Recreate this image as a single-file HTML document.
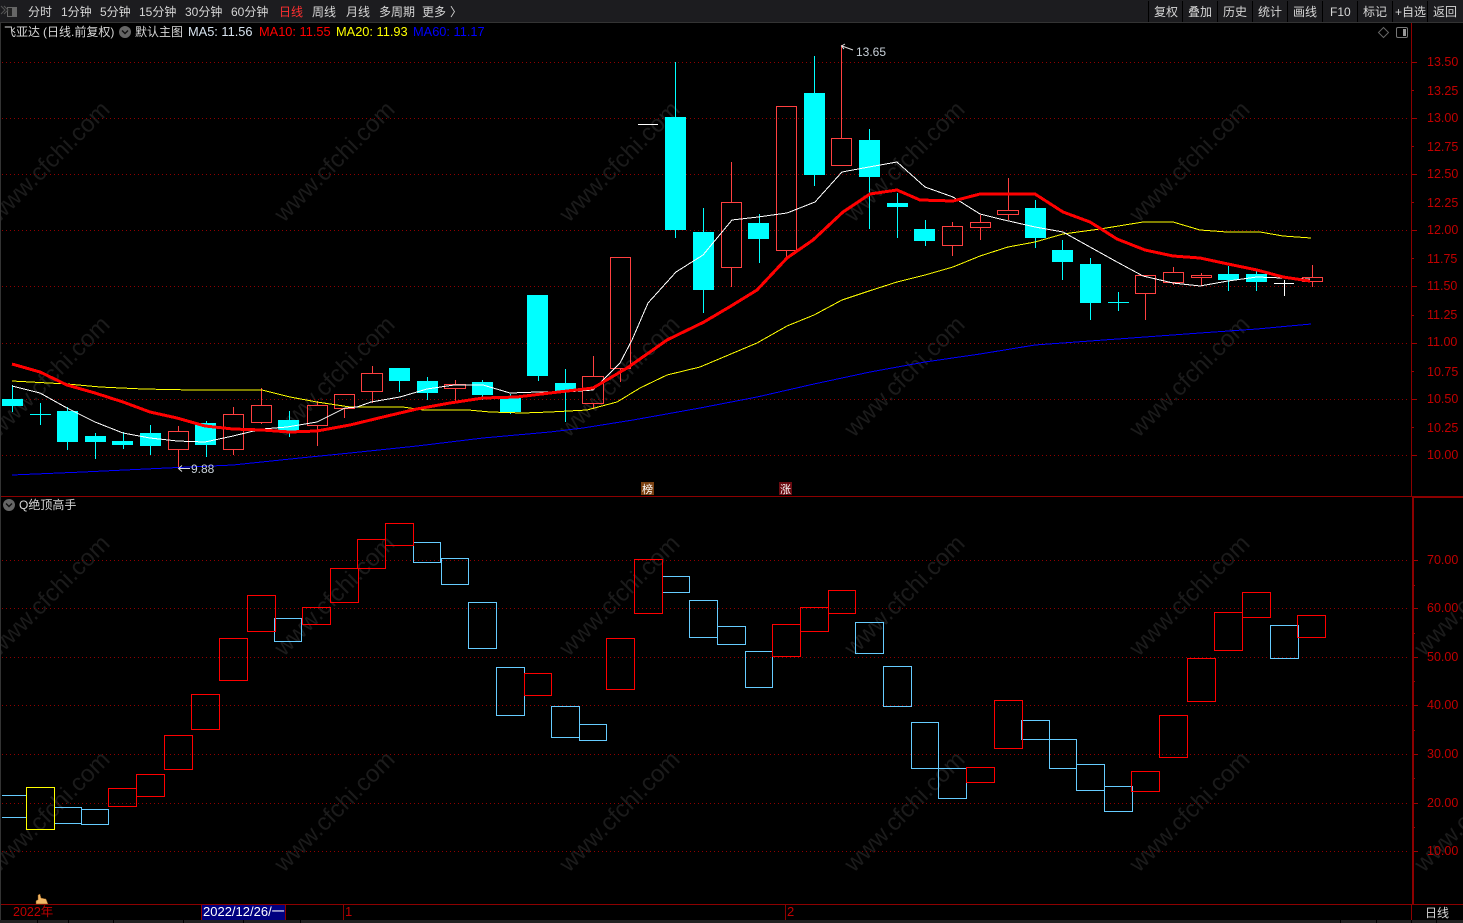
<!DOCTYPE html>
<html>
<head>
<meta charset="utf-8">
<title>飞亚达</title>
<style>
html,body{margin:0;padding:0;background:#000;width:1463px;height:923px;overflow:hidden}
svg{display:block;position:absolute;left:0;top:0}
text{font-family:"Liberation Sans","Noto Sans CJK SC",sans-serif;font-size:12px;white-space:pre}
.t text{fill:#d6d6d6}
.ax text{fill:#c00000;font-size:12.5px}
.wm text{fill:#1b1b1b;font-size:24px;text-anchor:middle}
.c{shape-rendering:crispEdges}
.ln{fill:none;shape-rendering:crispEdges}
.ma text{font-size:12.8px}
</style>
</head>
<body>
<svg width="1463" height="923" viewBox="0 0 1463 923" xmlns="http://www.w3.org/2000/svg">
<rect width="1463" height="923" fill="#000"/>

<!-- watermarks -->
<g class="wm">
<text transform="translate(55,167) rotate(-45)">www.cfchi.com</text>
<text transform="translate(340,167) rotate(-45)">www.cfchi.com</text>
<text transform="translate(625,167) rotate(-45)">www.cfchi.com</text>
<text transform="translate(910,167) rotate(-45)">www.cfchi.com</text>
<text transform="translate(1195,167) rotate(-45)">www.cfchi.com</text>
<text transform="translate(55,382) rotate(-45)">www.cfchi.com</text>
<text transform="translate(340,382) rotate(-45)">www.cfchi.com</text>
<text transform="translate(625,382) rotate(-45)">www.cfchi.com</text>
<text transform="translate(910,382) rotate(-45)">www.cfchi.com</text>
<text transform="translate(1195,382) rotate(-45)">www.cfchi.com</text>
<text transform="translate(55,601) rotate(-45)">www.cfchi.com</text>
<text transform="translate(340,601) rotate(-45)">www.cfchi.com</text>
<text transform="translate(625,601) rotate(-45)">www.cfchi.com</text>
<text transform="translate(910,601) rotate(-45)">www.cfchi.com</text>
<text transform="translate(1195,601) rotate(-45)">www.cfchi.com</text>
<text transform="translate(1480,601) rotate(-45)">www.cfchi.com</text>
<text transform="translate(55,817) rotate(-45)">www.cfchi.com</text>
<text transform="translate(340,817) rotate(-45)">www.cfchi.com</text>
<text transform="translate(625,817) rotate(-45)">www.cfchi.com</text>
<text transform="translate(910,817) rotate(-45)">www.cfchi.com</text>
<text transform="translate(1195,817) rotate(-45)">www.cfchi.com</text>
<text transform="translate(1480,817) rotate(-45)">www.cfchi.com</text>
</g>

<!-- grid -->
<path class="c" d="M2 62.5H1408M2 118.5H1408M2 174.5H1408M2 230.5H1408M2 286.5H1408M2 343.5H1408M2 399.5H1408M2 455.5H1408M2 560.5H1408M2 608.5H1408M2 657.5H1408M2 705.5H1408M2 754.5H1408M2 803.5H1408M2 851.5H1408" stroke="#900000" stroke-width="1" stroke-dasharray="1 3" fill="none"/>

<!-- frame -->
<rect x="0" y="22" width="1" height="901" fill="#333" class="c"/>
<rect x="1" y="496" width="1462" height="1" fill="#8c0000" class="c"/>
<rect x="1" y="904" width="1462" height="1" fill="#8c0000" class="c"/>
<rect x="1411" y="22" width="1" height="475" fill="#8c0000" class="c"/>
<rect x="1412" y="496" width="51" height="2" fill="#8c0000" class="c"/>
<rect x="1412" y="497" width="2" height="408" fill="#8c0000" class="c"/>
<rect x="1411" y="905" width="1" height="15" fill="#8c0000" class="c"/>

<!-- axis ticks -->
<path class="c" stroke="#a00000" fill="none" d="M1412 62.5h5M1412 90.5h2M1412 118.5h5M1412 146.5h2M1412 174.5h5M1412 202.5h2M1412 230.5h5M1412 258.5h2M1412 286.5h5M1412 315.5h2M1412 343.5h5M1412 371.5h2M1412 399.5h5M1412 427.5h2M1412 455.5h5M1414 560.5h4M1414 585.5h1M1414 608.5h4M1414 633.5h1M1414 657.5h4M1414 681.5h1M1414 705.5h4M1414 730.5h1M1414 754.5h4M1414 778.5h1M1414 803.5h4M1414 827.5h1M1414 851.5h4"/>
<g class="ax">
<text x="1427" y="66">13.50</text>
<text x="1427" y="95">13.25</text>
<text x="1427" y="122">13.00</text>
<text x="1427" y="151">12.75</text>
<text x="1427" y="178">12.50</text>
<text x="1427" y="207">12.25</text>
<text x="1427" y="234">12.00</text>
<text x="1427" y="263">11.75</text>
<text x="1427" y="290">11.50</text>
<text x="1427" y="319">11.25</text>
<text x="1427" y="346">11.00</text>
<text x="1427" y="376">10.75</text>
<text x="1427" y="403">10.50</text>
<text x="1427" y="432">10.25</text>
<text x="1427" y="459">10.00</text>
<text x="1427" y="564">70.00</text>
<text x="1427" y="612">60.00</text>
<text x="1427" y="661">50.00</text>
<text x="1427" y="709">40.00</text>
<text x="1427" y="758">30.00</text>
<text x="1427" y="807">20.00</text>
<text x="1427" y="855">10.00</text>
</g>

<!-- cyan wicks -->
<path class="c" stroke="#00ffff" fill="none" d="M12.5 385V412M40.5 403V425M30 414.5H51M67.5 407V450M95.5 433V459M123.5 432V449M150.5 425V455M206.5 421V457M289.5 411V437M399.5 368V392M427.5 377V400M482.5 380V400M510.5 394V414M538.5 370V381M565.5 369V422M675.5 62V238M703.5 208V313M759.5 214V263M814.5 56V186M869.5 129V229M897.5 193V238M925.5 220V246M1035.5 200V248M1062.5 240V280M1090.5 258V320M1118.5 292V311M1108 302.5H1129M1228.5 266V291M1256.5 270V291"/>
<!-- cyan bodies -->
<path class="c" fill="#00ffff" d="M2 399h21v7H2zM57 411h21v31H57zM85 436h21v6H85zM112 441h21v4h-21zM140 433h21v13h-21zM195 423h21v22h-21zM278 420h21v11h-21zM389 368h21v13h-21zM417 381h21v12h-21zM472 382h21v13h-21zM500 396h21v16h-21zM527 295h21v81h-21zM555 383h21v8h-21zM665 117h21v113h-21zM693 232h21v58h-21zM748 223h21v16h-21zM804 93h21v82h-21zM859 140h21v37h-21zM887 203h21v4h-21zM914 229h21v12h-21zM1025 208h21v30h-21zM1052 250h21v12h-21zM1080 264h21v39h-21zM1218 274h21v6h-21zM1246 274h21v8h-21z"/>
<!-- red candles -->
<path class="c" stroke="#ff4040" fill="none" d="M178.5 426V431M178.5 449V468M233.5 407V414M233.5 449V455M261.5 388V405M261.5 422V424M317.5 401V405M317.5 425V446M344.5 408V418M372.5 366V373M372.5 391V403M455.5 380V384M455.5 388V401M593.5 356V376M593.5 403V409M620.5 369V382M731.5 162V202M731.5 267V287M786.5 250V260M841.5 45V138M952.5 222V226M952.5 245V256M980.5 215V222M980.5 227V240M1008.5 178V210M1008.5 214V220M1145.5 293V320M1173.5 267V272M1173.5 282V285M1201.5 273V275M1201.5 277V286M1312.5 265V277M1312.5 281V287"/>
<path class="c" stroke="#ff4040" fill="none" d="M168.5 431.5h20v18h-20zM223.5 414.5h20v35h-20zM251.5 405.5h20v17h-20zM307.5 405.5h20v20h-20zM334.5 394.5h20v14h-20zM361.5 373.5h21v18h-21zM444.5 384.5h21v4h-21zM582.5 376.5h21v27h-21zM610.5 257.5h20v111h-20zM721.5 202.5h20v65h-20zM776.5 106.5h20v144h-20zM831.5 138.5h20v27h-20zM942.5 226.5h20v19h-20zM970.5 222.5h20v5h-20zM997.5 210.5h21v4h-21zM1135.5 275.5h20v18h-20zM1163.5 272.5h20v10h-20zM1191.5 275.5h20v2h-20zM1302.5 277.5h20v4h-20z"/>
<!-- white dojis -->
<path class="c" stroke="#ffffff" fill="none" d="M638 124.5H658M1274 283.5H1294M1284.5 280V296"/>

<!-- MA lines -->
<polyline class="ln" stroke="#0000ff" stroke-width="1" points="12,475 83,472 167,468 233,465 300,458 350,453 417,446 483,438 550,432 583,428 633,420 700,408 757,397 814,384 870,372 925,362 980,354 1035,345 1090,341 1145,337 1200,333 1257,329 1311,324"/>
<polyline class="ln" stroke="#ffff00" stroke-width="1" points="12,381 67,384 100,387 143,389 193,390 262,390 290,397 317,402 350,407 403,407 423,410 468,410 490,412 523,413 550,412 587,410 617,402 640,388 667,375 700,367 757,343 787,326 814,315 842,300 869,291 897,282 925,275 953,267 980,256 1008,247 1035,242 1063,234 1100,229 1143,222 1173,222 1200,230 1227,232 1260,232 1283,236 1311,238"/>
<polyline class="ln" stroke="#ffffff" stroke-width="1" points="12,386 40,393 67,408 95,422 123,433 150,438 177,441 205,442 233,436 262,429 287,427 317,422 345,408 357,407 371,402 400,397 427,389 454,385 483,385 510,393 538,392 565,392 593,390 620,363 632,340 648,303 676,272 703,255 732,220 758,217 787,213 815,202 842,172 869,167 897,162 925,187 953,197 980,214 1000,219 1035,227 1063,232 1090,247 1117,262 1143,276 1173,283 1200,286 1228,281 1257,277 1283,278 1310,279"/>
<polyline class="ln" stroke="#ff0000" stroke-width="3" points="12,364 40,372 67,385 95,393 123,402 150,412 177,418 205,426 233,429 262,430 290,432 317,431 350,425 383,417 417,409 450,403 483,398 517,397 550,393 593,388 627,368 650,352 667,340 704,322 731,306 757,290 787,258 813,240 843,212 870,194 897,190 920,200 953,201 980,194 1008,194 1035,194 1063,212 1090,222 1117,239 1145,250 1173,256 1200,258 1228,264 1257,270 1283,277 1310,281"/>

<!-- price markers -->
<path fill="none" stroke="#dcdcdc" d="M190 468.5H179M182 465.5L178.5 468.5L182 471.5"/>
<text x="191" y="473" fill="#c8d0d8">9.88</text>
<path fill="none" stroke="#dcdcdc" d="M853 50L842 46M845 44L841.5 46L844 49"/>
<text x="856" y="56" fill="#c8d0d8">13.65</text>

<!-- badges -->
<rect x="641" y="482" width="13" height="13" fill="#7a4010" class="c"/>
<text x="642" y="493" fill="#fff" style="font-size:11px">榜</text>
<rect x="779" y="482" width="13" height="13" fill="#6a0a10" class="c"/>
<text x="780" y="493" fill="#fff" style="font-size:11px">涨</text>

<!-- lower pane boxes -->
<path class="c" fill="none" stroke="#66ccff" d="M2 795.5H26M2 817.5H26M54.5 807.5h27v16h-27zM81.5 809.5h27v15h-27zM274.5 618.5h27v23h-27zM413.5 542.5h27v20h-27zM441.5 558.5h27v26h-27zM468.5 602.5h28v46h-28zM496.5 667.5h28v48h-28zM551.5 706.5h28v31h-28zM579.5 724.5h27v16h-27zM662.5 576.5h27v16h-27zM689.5 600.5h28v37h-28zM717.5 626.5h28v18h-28zM745.5 651.5h27v36h-27zM855.5 622.5h28v31h-28zM883.5 666.5h28v40h-28zM911.5 722.5h27v46h-27zM938.5 768.5h28v30h-28zM1021.5 720.5h28v19h-28zM1049.5 739.5h27v29h-27zM1076.5 764.5h28v26h-28zM1104.5 786.5h28v25h-28zM1270.5 625.5h28v33h-28z"/>
<path class="c" fill="none" stroke="#ff0000" d="M108.5 788.5h28v18h-28zM136.5 774.5h28v22h-28zM164.5 735.5h28v34h-28zM191.5 694.5h28v35h-28zM219.5 638.5h28v42h-28zM247.5 595.5h28v36h-28zM302.5 607.5h28v17h-28zM330.5 568.5h28v34h-28zM357.5 539.5h28v29h-28zM385.5 523.5h28v22h-28zM524.5 673.5h27v22h-27zM606.5 638.5h28v51h-28zM634.5 559.5h28v54h-28zM772.5 624.5h28v32h-28zM800.5 607.5h28v24h-28zM828.5 590.5h27v23h-27zM966.5 767.5h28v15h-28zM994.5 700.5h28v48h-28zM1131.5 771.5h28v20h-28zM1159.5 715.5h28v42h-28zM1187.5 658.5h28v43h-28zM1214.5 612.5h28v38h-28zM1242.5 592.5h28v25h-28zM1297.5 615.5h28v22h-28z"/>
<rect class="c" x="26.5" y="787.5" width="28" height="42" fill="none" stroke="#ffff00"/>

<!-- top bar -->
<rect x="0" y="0" width="1463" height="22" fill="#1c1c1f" class="c"/>
<rect x="0" y="22" width="1463" height="1" fill="#333" class="c"/>
<rect x="7.5" y="7.5" width="9" height="9" fill="#222" stroke="#666" class="c"/>
<rect x="12" y="8" width="4" height="8" fill="#666" class="c"/>
<path d="M1 6l4 4-4 4M4 6l4 4-4 4" fill="none" stroke="#555"/>
<g class="t">
<text x="28" y="16">分时</text>
<text x="61" y="16">1分钟</text>
<text x="100" y="16">5分钟</text>
<text x="139" y="16">15分钟</text>
<text x="185" y="16">30分钟</text>
<text x="231" y="16">60分钟</text>
<text x="279" y="16" style="fill:#ff3030">日线</text>
<text x="312" y="16">周线</text>
<text x="346" y="16">月线</text>
<text x="379" y="16">多周期</text>
<text x="422" y="16">更多</text>
<text x="450" y="16">〉</text>
<text x="1154" y="16">复权</text>
<text x="1188" y="16">叠加</text>
<text x="1223" y="16">历史</text>
<text x="1258" y="16">统计</text>
<text x="1293" y="16">画线</text>
<text x="1330" y="16">F10</text>
<text x="1363" y="16">标记</text>
<text x="1395" y="16">+自选</text>
<text x="1433" y="16">返回</text>
</g>
<path class="c" stroke="#000" d="M1148.5 1V22M1182.5 1V22M1217.5 1V22M1252.5 1V22M1287.5 1V22M1322.5 1V22M1357.5 1V22M1392.5 1V22M1427.5 1V22"/>

<!-- header legend -->
<text x="4" y="36" fill="#d6d6d6">飞亚达</text>
<text x="43" y="36" fill="#d6d6d6">(日线.前复权)</text>
<circle cx="125" cy="32" r="6" fill="#666"/>
<path d="M122 30.5l3 3 3-3" fill="none" stroke="#111" stroke-width="1.4"/>
<text x="135" y="36" fill="#d6d6d6">默认主图</text>
<g class="ma">
<text x="188" y="36" fill="#d8e4f0">MA5: 11.56</text>
<text x="259" y="36" fill="#ff0000">MA10: 11.55</text>
<text x="336" y="36" fill="#ffff00">MA20: 11.93</text>
<text x="413" y="36" fill="#0000ff">MA60: 11.17</text>
</g>
<path d="M1383.5 27.5l5 5-5 5-5-5z" fill="none" stroke="#666"/>
<rect x="1396.5" y="27.5" width="11" height="10" rx="1.5" fill="none" stroke="#777"/>
<rect x="1403" y="29" width="3" height="7" fill="#999" class="c"/>

<!-- lower legend -->
<circle cx="9" cy="505" r="6" fill="#666"/>
<path d="M6 503.5l3 3 3-3" fill="none" stroke="#111" stroke-width="1.4"/>
<text x="19" y="509" fill="#d6d6d6">Q绝顶高手</text>

<!-- cursor hand -->
<path d="M36 904v-3l1-1h1v-5l2-1 1 4 5 1 2 5z" fill="#f2b766" stroke="#7a4a10" stroke-width=".5"/>

<!-- bottom bar -->
<text x="13" y="916" fill="#c00000" style="font-size:12.5px">2022年</text>
<rect x="201" y="905" width="85" height="15" fill="#000080" class="c"/>
<path class="c" stroke="#8c0000" d="M201.5 905V920M285.5 905V920M343.5 905V920M785.5 905V920"/>
<text x="203" y="916" fill="#fff" style="font-size:13px">2022/12/26/一</text>
<text x="345" y="916" fill="#c00000" style="font-size:13px">1</text>
<text x="787" y="916" fill="#c00000" style="font-size:13px">2</text>
<text x="1425" y="917" fill="#d6d6d6">日线</text>
<rect x="0" y="920" width="1463" height="3" fill="#222" class="c"/>
<path class="c" stroke="#000" d="M37.5 920V923M68.5 920V923M113.5 920V923M183.5 920V923M243.5 920V923M300.5 920V923M1340.5 920V923M1376.5 920V923M1411.5 920V923M1436.5 920V923"/>
</svg>
</body>
</html>
